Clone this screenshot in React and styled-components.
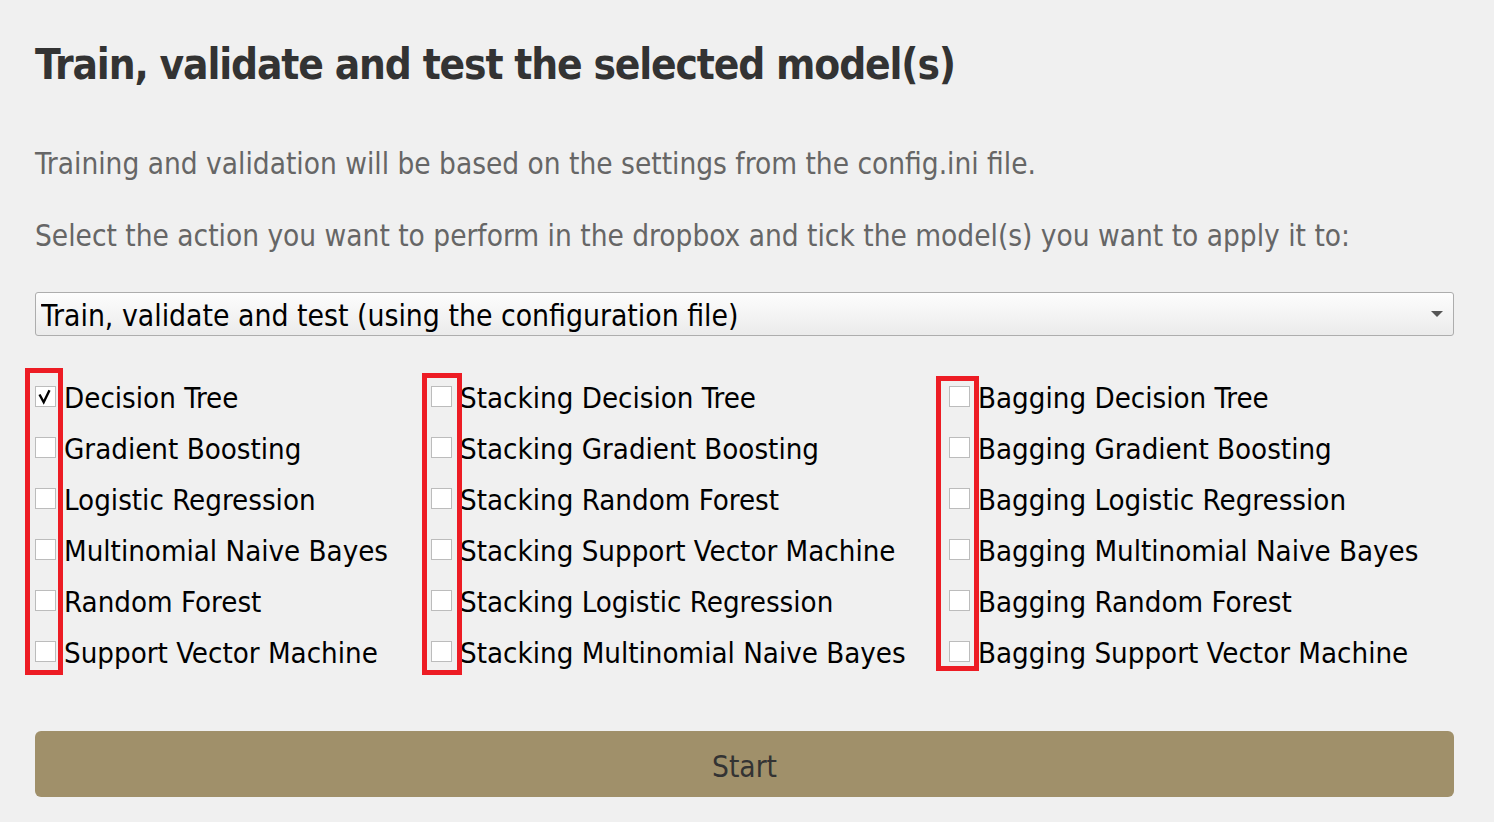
import React, { useState } from "react";
import styled, { createGlobalStyle } from "styled-components";

const GlobalStyle = createGlobalStyle`
  html, body {
    margin: 0;
    padding: 0;
    background: #f0f0f0;
  }
  body {
    font-family: "DejaVu Sans Condensed", "DejaVu Sans", sans-serif;
  }
`;

const Page = styled.div`
  padding: 41px 40px 20px 35px;
`;

const Title = styled.h1`
  margin: 0;
  font-size: 42px;
  line-height: 48px;
  font-weight: 700;
  letter-spacing: -1.15px;
  color: #333333;
`;

const Lead = styled.p`
  margin: ${(p) => p.$top}px 0 0 0;
  font-size: 29.5px;
  line-height: 36px;
  color: #666666;
`;

const SelectWrap = styled.div`
  position: relative;
  margin-top: 38px;
  height: 44px;
`;

const ActionSelect = styled.select`
  appearance: none;
  -webkit-appearance: none;
  width: 100%;
  height: 44px;
  box-sizing: border-box;
  border: 1px solid #adadad;
  border-radius: 3px;
  background: linear-gradient(#fdfdfd, #ebebeb);
  font-family: "DejaVu Sans Condensed", "DejaVu Sans", sans-serif;
  font-size: 29.8px;
  color: #000;
  padding: 3px 40px 0 5px;
  outline: none;
`;

const Arrow = styled.svg`
  position: absolute;
  right: 11px;
  top: 19px;
  pointer-events: none;
`;

const ModelGroup = styled.div`
  position: relative;
  margin-top: 36px;
  display: grid;
  grid-template-columns: 396px 518px auto;
`;

const Column = styled.div`
  display: flex;
  flex-direction: column;
`;

const Row = styled.label`
  display: flex;
  align-items: center;
  height: 51px;
  gap: 8px;
  font-size: 29.2px;
  color: #000;
  white-space: nowrap;
  cursor: default;
`;

const HiddenInput = styled.input`
  position: absolute;
  opacity: 0;
  width: 0;
  height: 0;
  margin: 0;
`;

const Box = styled.span`
  flex: none;
  width: 21px;
  height: 21px;
  box-sizing: border-box;
  border: 1px solid #bcbcbc;
  background: #ffffff;
  margin-bottom: 2px;
  display: flex;
  align-items: center;
  justify-content: center;
`;

const Highlight = styled.div`
  position: absolute;
  box-sizing: border-box;
  border: 5px solid #ed1c24;
  left: ${(p) => p.$left}px;
  top: ${(p) => p.$top}px;
  width: ${(p) => p.$width}px;
  height: ${(p) => p.$height}px;
  pointer-events: none;
`;

const StartButton = styled.button`
  display: block;
  width: 100%;
  height: 66px;
  margin-top: 53px;
  padding: 6px 0 0 0;
  border: none;
  border-radius: 6px;
  background: #a0906a;
  color: #333333;
  font-family: "DejaVu Sans Condensed", "DejaVu Sans", sans-serif;
  font-size: 29.6px;
  cursor: pointer;
`;

const columns = [
  [
    "Decision Tree",
    "Gradient Boosting",
    "Logistic Regression",
    "Multinomial Naive Bayes",
    "Random Forest",
    "Support Vector Machine",
  ],
  [
    "Stacking Decision Tree",
    "Stacking Gradient Boosting",
    "Stacking Random Forest",
    "Stacking Support Vector Machine",
    "Stacking Logistic Regression",
    "Stacking Multinomial Naive Bayes",
  ],
  [
    "Bagging Decision Tree",
    "Bagging Gradient Boosting",
    "Bagging Logistic Regression",
    "Bagging Multinomial Naive Bayes",
    "Bagging Random Forest",
    "Bagging Support Vector Machine",
  ],
];

const highlights = [
  { left: -10, top: -4, width: 38, height: 307 },
  { left: 387, top: 1, width: 40, height: 302 },
  { left: 901, top: 4, width: 43, height: 295 },
];

const CheckMark = () => (
  <svg width="17" height="17" viewBox="0 0 17 17">
    <polyline
      points="2.5,6.5 6.7,14.2 12.5,2.2"
      fill="none"
      stroke="#000"
      strokeWidth="2.4"
      strokeLinejoin="miter"
    />
  </svg>
);

const ModelOption = ({ name, checked, onToggle }) => (
  <Row>
    <HiddenInput type="checkbox" checked={checked} onChange={onToggle} />
    <Box>{checked && <CheckMark />}</Box>
    {name}
  </Row>
);

export default function App() {
  const [selected, setSelected] = useState({ "Decision Tree": true });

  const toggle = (name) =>
    setSelected((s) => ({ ...s, [name]: !s[name] }));

  return (
    <Page>
      <GlobalStyle />
      <Title>Train, validate and test the selected model(s)</Title>
      <Lead $top={57}>
        Training and validation will be based on the settings from the
        config.ini file.
      </Lead>
      <Lead $top={36}>
        Select the action you want to perform in the dropbox and tick the
        model(s) you want to apply it to:
      </Lead>
      <SelectWrap>
        <ActionSelect defaultValue="tvt">
          <option value="tvt">
            Train, validate and test (using the configuration file)
          </option>
          <option value="test">Test only</option>
        </ActionSelect>
        <Arrow width="12" height="6" viewBox="0 0 12 6">
          <polygon points="0,0 12,0 6,6" fill="#555555" />
        </Arrow>
      </SelectWrap>
      <ModelGroup>
        {columns.map((col, i) => (
          <Column key={i}>
            {col.map((name) => (
              <ModelOption
                key={name}
                name={name}
                checked={!!selected[name]}
                onToggle={() => toggle(name)}
              />
            ))}
          </Column>
        ))}
        {highlights.map((h, i) => (
          <Highlight
            key={i}
            $left={h.left}
            $top={h.top}
            $width={h.width}
            $height={h.height}
          />
        ))}
      </ModelGroup>
      <StartButton>Start</StartButton>
    </Page>
  );
}
